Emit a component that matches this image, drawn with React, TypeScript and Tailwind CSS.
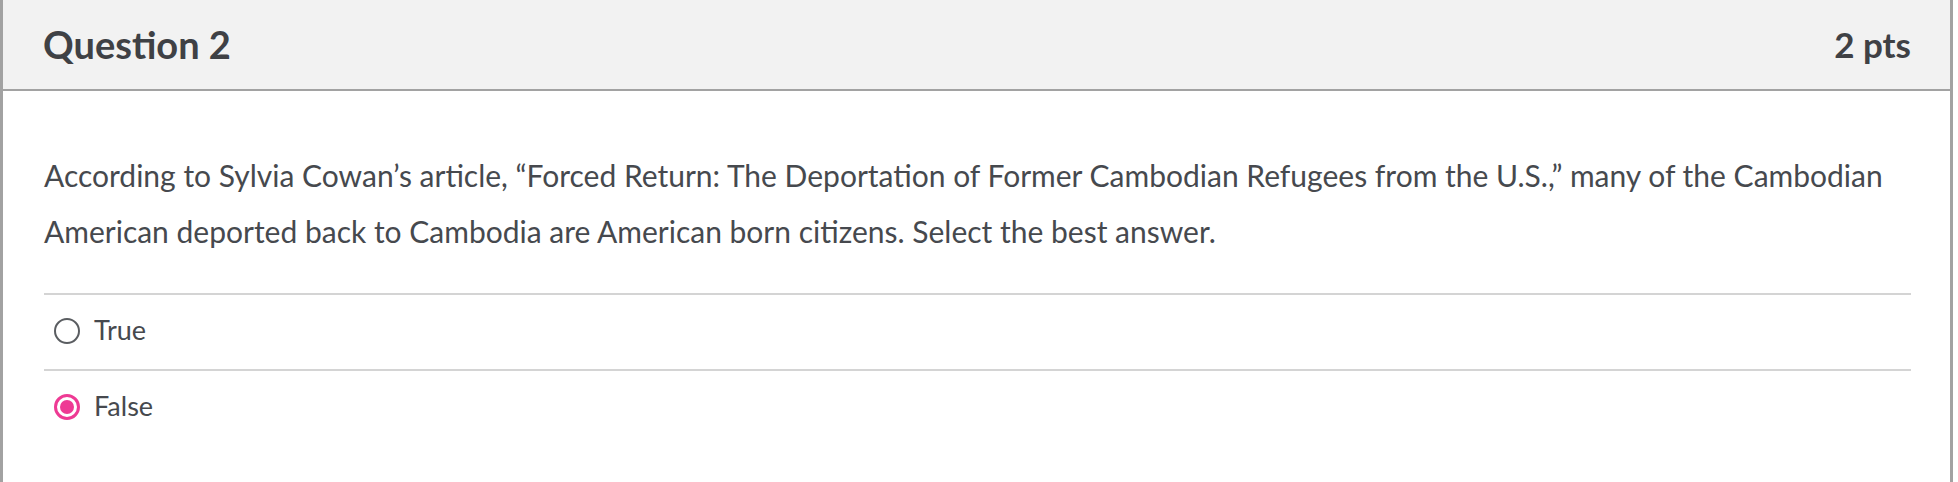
import React from 'react';

const answers = [
  { id: 'true', label: 'True', selected: false },
  { id: 'false', label: 'False', selected: true },
];

const Radio: React.FC<{ selected: boolean }> = ({ selected }) =>
  selected ? (
    <span className="flex h-[26px] w-[26px] shrink-0 items-center justify-center rounded-full border-[3px] border-[#ee3a94]">
      <span className="h-[14px] w-[14px] rounded-full bg-[#ee3a94]" />
    </span>
  ) : (
    <span className="h-[26px] w-[26px] shrink-0 rounded-full border-[2px] border-[#5a5d61]" />
  );

export default function App() {
  return (
    <div className="h-[482px] w-[1958px] overflow-hidden bg-white font-['Lato','Noto_Sans',sans-serif] text-[#46494e]">
      <div className="w-[1953px] border-x-[3px] border-[#a2a2a2]">
        <div className="flex h-[91px] items-center justify-between border-b-2 border-[#a2a2a2] bg-[#f2f2f2] pl-[40px] pr-[39px]">
          <h2 className="text-[38px] font-bold text-[#3f4145]">Question 2</h2>
          <span className="text-[35px] font-bold text-[#3f4145]">2 pts</span>
        </div>

        <div className="pl-[41px] pr-[39px] pt-[56px] pb-[60px]">
          <p className="text-[30px] leading-[56px]">
            According to Sylvia Cowan’s article, “Forced Return: The Deportation of Former Cambodian Refugees from the U.S.,” many of the Cambodian American deported back to Cambodia are American born citizens. Select the best answer.
          </p>

          <div className="mt-[34px]">
            {answers.map(a => (
              <div key={a.id} className="flex h-[76px] items-center gap-[14px] border-t-2 border-[#d4d4d4] pb-[3px] pl-[10px]">
                <Radio selected={a.selected} />
                <span className="text-[27px]">{a.label}</span>
              </div>
            ))}
          </div>
        </div>
      </div>
    </div>
  );
}
